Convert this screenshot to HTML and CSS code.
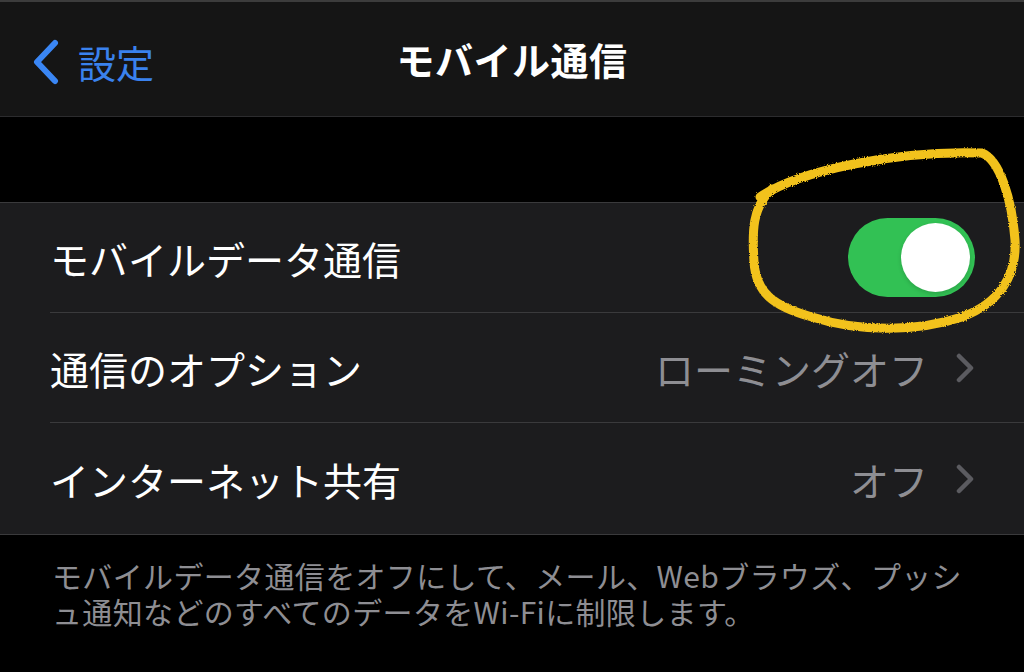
FILE: index.html
```html
<!DOCTYPE html>
<html lang="ja">
<head>
  <meta charset="UTF-8" />
  <meta name="viewport" content="width=device-width, initial-scale=1.0"/>
  <title>モバイル通信</title>
  <link rel="stylesheet" href="styles.css">
</head>
<body>

  <div class="navbar">
    <a class="back" href="#">
      <svg class="back-icon" viewBox="0 0 28 46" width="28" height="46">
        <path d="M23 4 L5 23 L23 42" fill="none" stroke="#3a86f4" stroke-width="6" stroke-linecap="round" stroke-linejoin="round"/>
      </svg>
      <span>設定</span>
    </a>
    <h1 class="title">モバイル通信</h1>
  </div>

  <div class="spacer"></div>

  <div class="group">
    <div class="row">
      <div class="row-body">
        <span class="label">モバイルデータ通信</span>
        <div class="toggle on"><div class="knob"></div></div>
      </div>
    </div>
    <div class="row">
      <div class="row-body">
        <span class="label">通信のオプション</span>
        <span class="value">ローミングオフ</span>
        <svg class="chevron" viewBox="0 0 20 30" width="20" height="30">
          <path d="M4 3 L16 15 L4 27" fill="none" stroke="#5b5b60" stroke-width="4.5" stroke-linecap="round" stroke-linejoin="round"/>
        </svg>
      </div>
    </div>
    <div class="row">
      <div class="row-body">
        <span class="label">インターネット共有</span>
        <span class="value">オフ</span>
        <svg class="chevron" viewBox="0 0 20 30" width="20" height="30">
          <path d="M4 3 L16 15 L4 27" fill="none" stroke="#5b5b60" stroke-width="4.5" stroke-linecap="round" stroke-linejoin="round"/>
        </svg>
      </div>
    </div>
  </div>

  <p class="footer">モバイルデータ通信をオフにして、メール、Webブラウズ、プッシュ通知などのすべてのデータをWi-Fiに制限します。</p>

  <!-- hand-drawn marker circle around the switch -->
  <svg class="scribble" viewBox="740 140 284 200" width="284" height="200">
    <defs>
      <filter id="rough">
        <feTurbulence type="fractalNoise" baseFrequency="0.9" numOctaves="2" result="noise"/>
        <feDisplacementMap in="SourceGraphic" in2="noise" scale="3"/>
      </filter>
    </defs>
    <path d="M760 197 C 800 170, 900 150, 982 153 C 1000 160, 1012 200, 1015 240 C 1017 275, 1000 303, 962 317 C 920 331, 862 333, 812 317 C 772 306, 756 292, 754 262 C 752 232, 752 207, 772 189"
          fill="none" stroke="#f2c21b" stroke-width="9" stroke-linecap="round" filter="url(#rough)"/>
  </svg>

</body>
</html>
```

FILE: styles.css
```css
body {
  margin: 0;
  background: #000;
  font-family: "Noto Sans CJK JP", "Noto Sans", sans-serif;
  color: #fff;
  position: relative;
  width: 1024px;
  height: 672px;
  overflow: hidden;
}
.navbar {
  height: 114px;
  background: #151515;
  border-top: 2px solid #3c3c3c;
  border-bottom: 1px solid #2c2c2e;
  display: flex;
  align-items: center;
  justify-content: center;
  position: relative;
}
.back {
  position: absolute;
  left: 32px;
  top: 36px;
  display: flex;
  align-items: center;
  gap: 18px;
  color: #3a82ee;
  text-decoration: none;
  font-size: 38px;
  line-height: 48px;
}
.title {
  margin: 0;
  font-size: 38px;
  font-weight: bold;
  line-height: 48px;
  letter-spacing: 0.5px;
}
.spacer {
  height: 85px;
}
.group {
  background: #1c1c1e;
  border-top: 1px solid #3a3a3c;
  border-bottom: 1px solid #3a3a3c;
}
.row {
  padding-left: 50px;
}
.row-body {
  height: 109px;
  display: flex;
  align-items: center;
  padding-right: 49px;
  border-bottom: 1px solid #3a3a3c;
}
.row:last-child .row-body {
  height: 111px;
  border-bottom: none;
}
.label {
  flex: 1;
  font-size: 39px;
  line-height: 48px;
}
.value {
  font-size: 39px;
  line-height: 48px;
  color: #8e8e93;
  margin-right: 27px;
}
.chevron {
  display: block;
}
.toggle {
  width: 127px;
  height: 79px;
  border-radius: 40px;
  background: #787880;
  position: relative;
}
.toggle.on {
  background: #32c154;
}
.toggle .knob {
  position: absolute;
  top: 5px;
  left: 5px;
  width: 69px;
  height: 69px;
  border-radius: 50%;
  background: #fff;
  box-shadow: 0 2px 4px rgba(0,0,0,0.15);
}
.toggle.on .knob {
  left: auto;
  right: 5px;
}
.footer {
  margin: 0;
  padding: 22px 52px 0 52px;
  font-size: 30px;
  line-height: 36px;
  letter-spacing: 0.35px;
  color: #8e8e93;
  line-break: loose;
}
.scribble {
  position: absolute;
  left: 740px;
  top: 140px;
}
```
